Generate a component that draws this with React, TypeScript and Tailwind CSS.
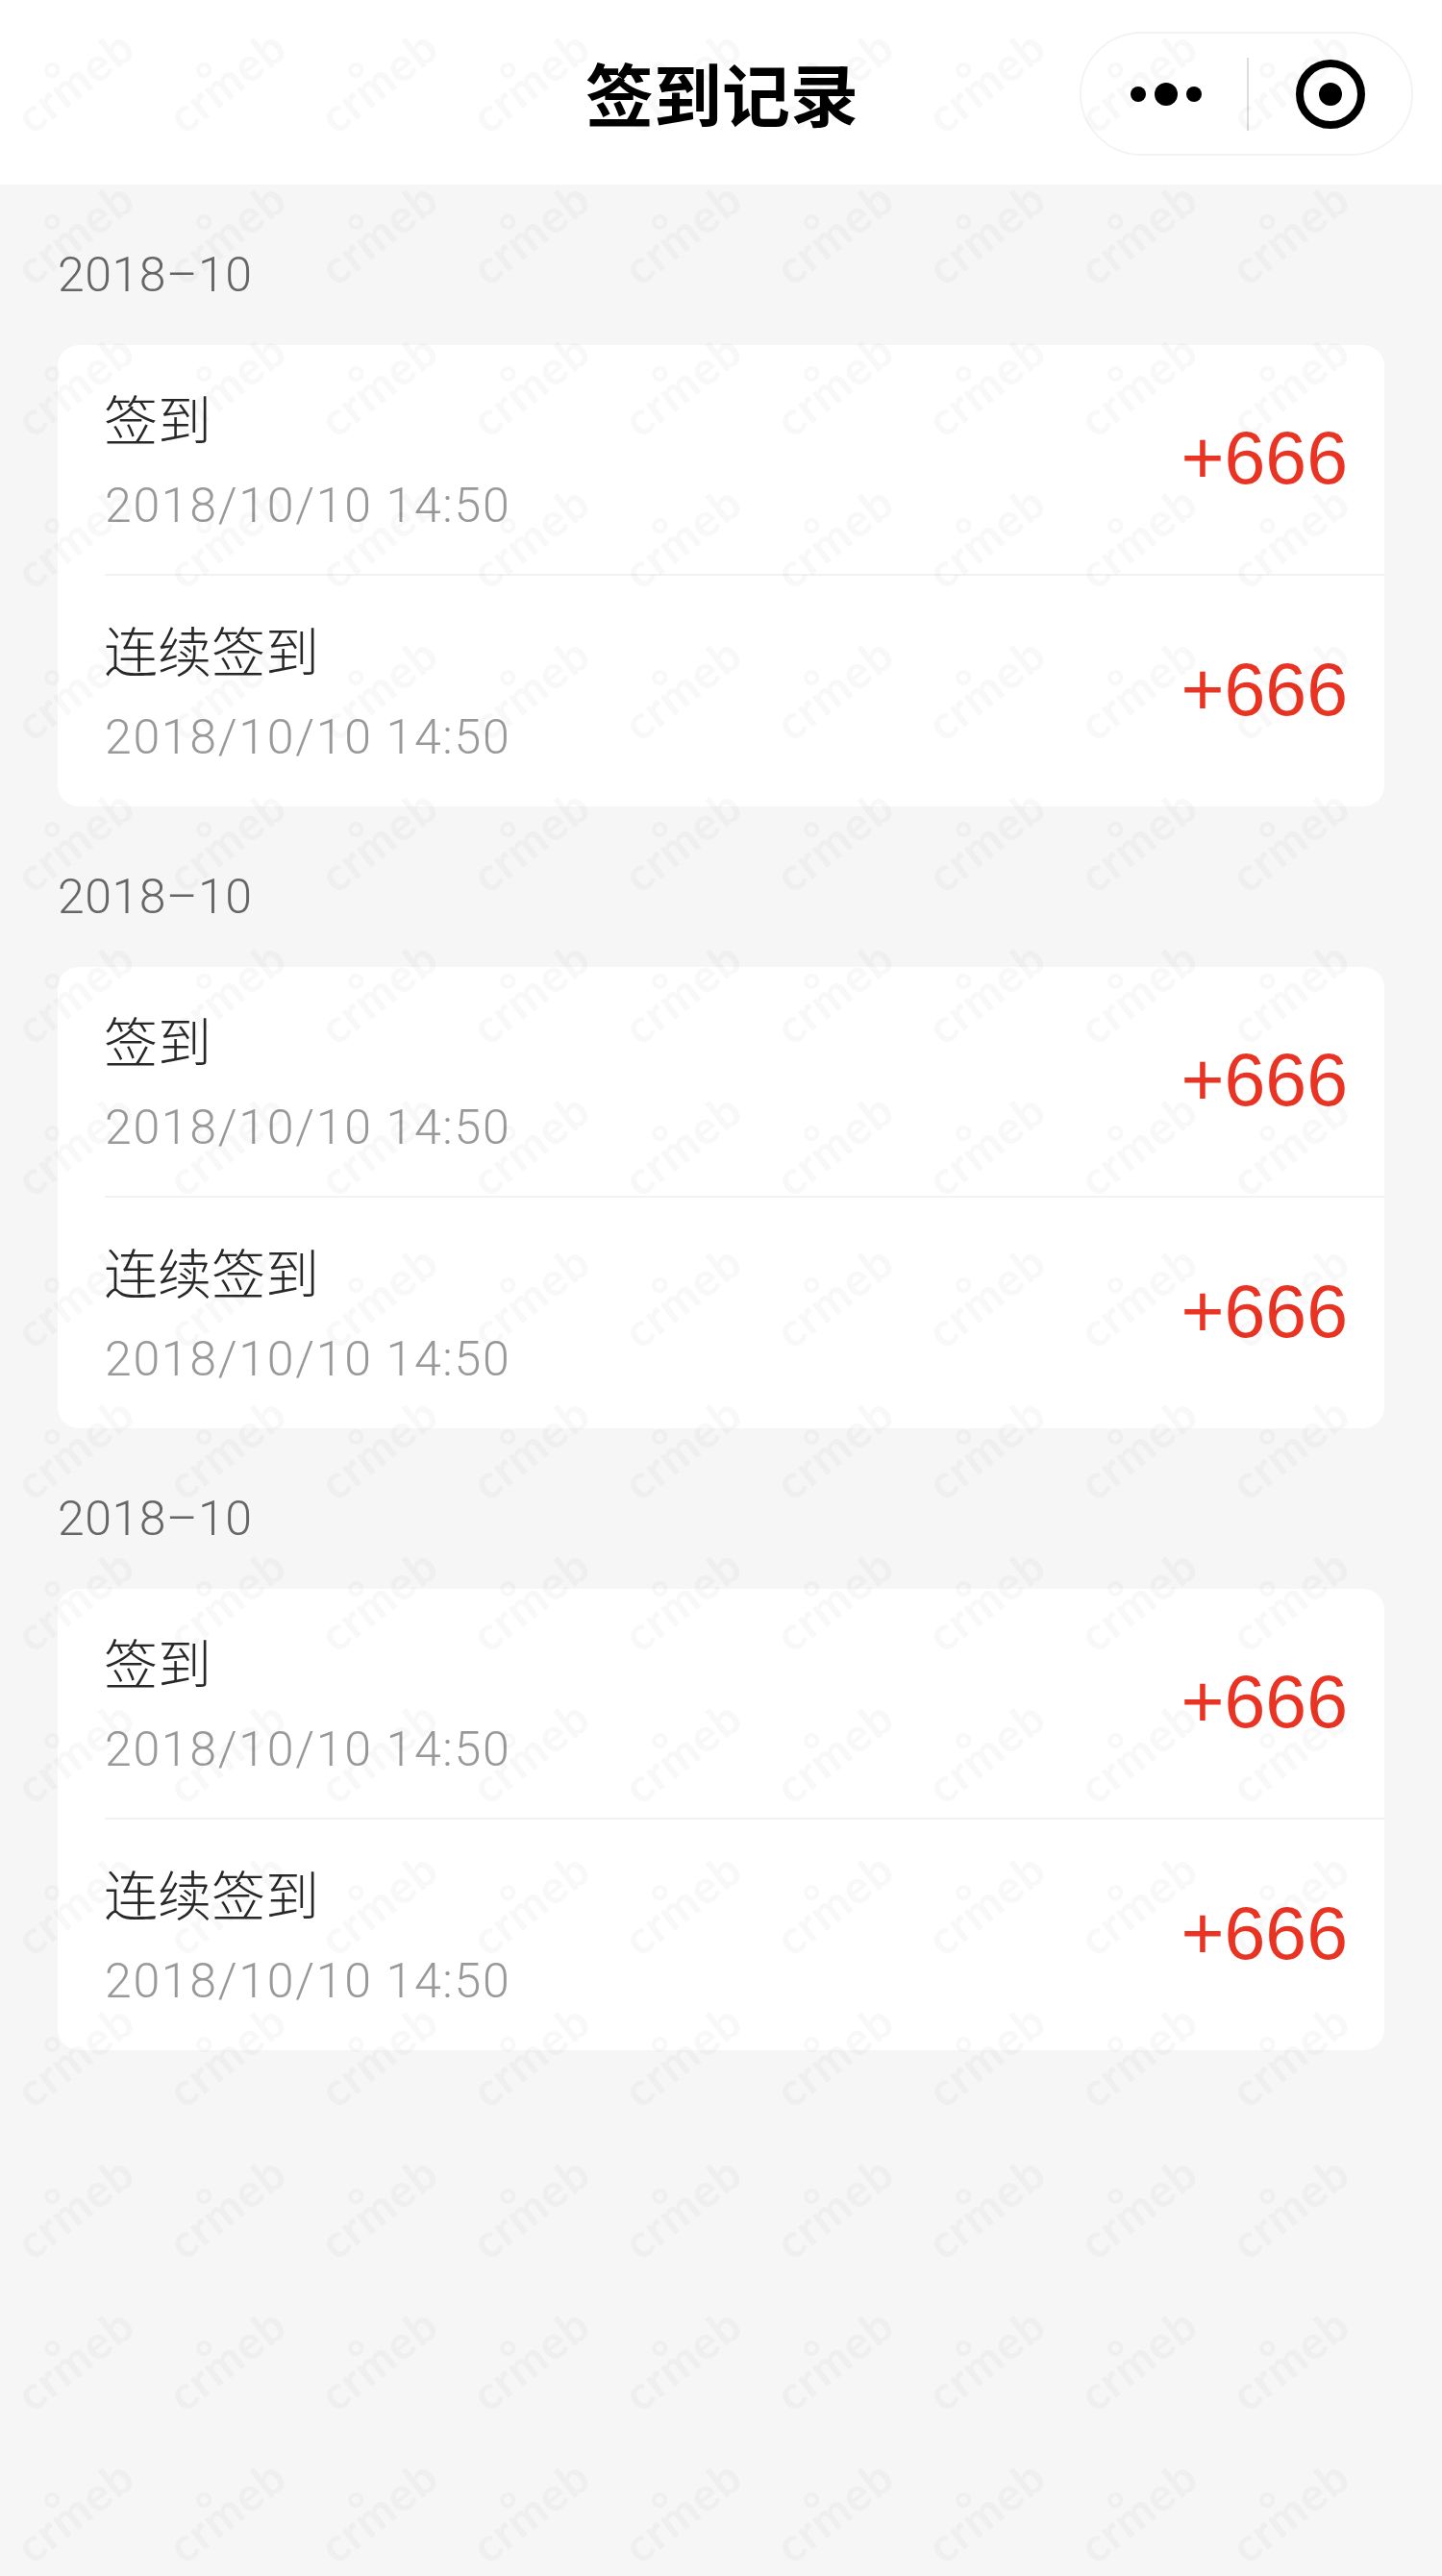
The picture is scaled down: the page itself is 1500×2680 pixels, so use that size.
const groups = ['2018–10', '2018–10', '2018–10'];

const rows = [
  { title: '签到', date: '2018/10/10 14:50', value: '+666' },
  { title: '连续签到', date: '2018/10/10 14:50', value: '+666' },
];

const marks = Array.from({ length: 10 * 17 });

function Watermark() {
  return (
    <div className="pointer-events-none absolute inset-0 flex flex-wrap content-start overflow-hidden pt-[5px] opacity-[0.022]" aria-hidden="true">
      {marks.map((_, i) => (
        <div key={i} className="flex h-[158px] w-[158px] items-center justify-center">
          <span className="relative -translate-x-[1px] -rotate-[38deg] font-['Lato',sans-serif] text-[48px] leading-none font-bold tracking-[1px] text-black">
            crmeb
            <span className="absolute top-[-7px] left-[50px] h-[16px] w-[16px] rounded-full border-[4px] border-black" />
          </span>
        </div>
      ))}
    </div>
  );
}

function Capsule() {
  return (
    <div className="mt-[3px] mr-[30px] flex h-[129px] w-[347px] items-center justify-self-end rounded-full border-2 border-[#f3f3f3]">
      <div className="flex w-[172px] items-center justify-center gap-[9px] pl-[3px]">
        <span className="h-[16px] w-[16px] rounded-full bg-black" />
        <span className="h-[24px] w-[24px] rounded-full bg-black" />
        <span className="h-[16px] w-[16px] rounded-full bg-black" />
      </div>
      <div className="h-[76px] w-[2px] bg-[#dddddd]" />
      <div className="flex flex-1 items-center justify-center">
        <svg width="74" height="74" viewBox="0 0 74 74">
          <circle cx="37" cy="37" r="32" fill="none" stroke="#000" strokeWidth="8" />
          <circle cx="37" cy="37" r="12" fill="#000" />
        </svg>
      </div>
    </div>
  );
}

export default function App() {
  return (
    <div className="relative min-h-[2680px] w-[1500px] overflow-hidden bg-[#f6f6f6] font-['Noto_Sans_CJK_SC',sans-serif]">
      <div className="grid h-[192px] grid-cols-[1fr_auto_1fr] items-center bg-white">
        <div />
        <h1 className="pb-[2px] pl-[2px] text-[71px] leading-none font-bold text-black">签到记录</h1>
        <Capsule />
      </div>

      <div className="px-[60px]">
        {groups.map((month, g) => (
          <section key={g}>
            <div className="flex h-[167px] items-end pb-[48px] font-['Roboto',sans-serif] text-[50px] leading-[50px] font-light tracking-[0.5px] text-[#666666]">
              {month}
            </div>
            <div className="rounded-[22px] bg-white">
              {rows.map((row, i) => (
                <div key={row.title} className="pl-[49px]">
                  <div className={`flex h-[240px] items-center justify-between pr-[38px] ${i === 0 ? 'border-b-2 border-[#f2f2f2]' : ''}`}>
                    <div className="flex flex-col gap-[33px]">
                      <div className="-ml-[1px] h-[63px] text-[56px] leading-[63px] font-light text-[#282828]">{row.title}</div>
                      <div className="font-['Roboto',sans-serif] text-[50px] leading-[56px] font-light tracking-[1.7px] text-[#999999]">{row.date}</div>
                    </div>
                    <div className="pb-[3px] font-['Liberation_Sans',sans-serif] text-[77px] leading-none font-normal text-[#e93323]">{row.value}</div>
                  </div>
                </div>
              ))}
            </div>
          </section>
        ))}
      </div>

      <Watermark />
    </div>
  );
}
